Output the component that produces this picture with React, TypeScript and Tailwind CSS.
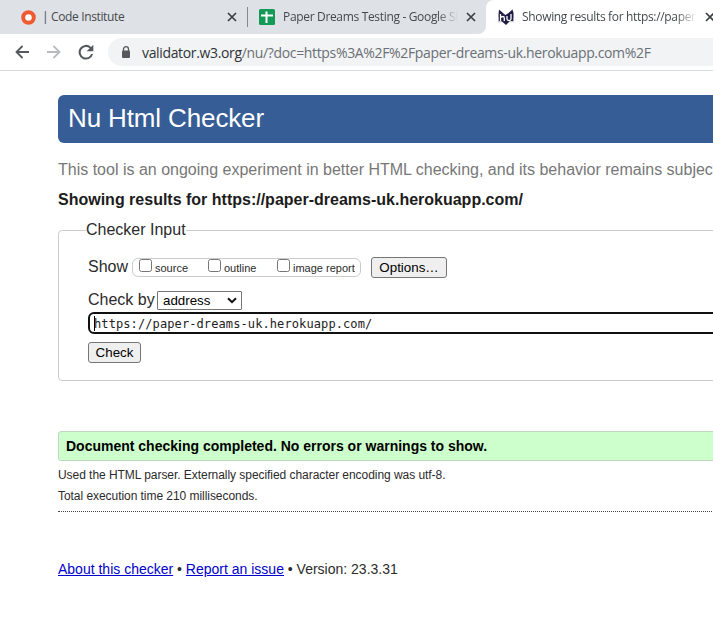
import type { ReactNode } from "react";

function CloseIcon() {
  return (
    <svg width="10" height="10" viewBox="0 0 10 10" className="shrink-0" stroke="#3c4043" strokeWidth="1.7">
      <path d="M1 1 9 9M9 1 1 9" />
    </svg>
  );
}

function SheetsIcon() {
  return (
    <svg width="16" height="16" viewBox="0 0 16 16" className="shrink-0">
      <rect width="16" height="16" rx="1.5" fill="#159957" />
      <path d="M7.5 2.5V14M2 6.5H14" stroke="#fff" strokeWidth="2" />
    </svg>
  );
}

function CheckerIcon() {
  return (
    <svg width="16" height="16" viewBox="0 0 16 16" className="shrink-0">
      <path d="M1 0.5 5.5 4.5 7.5 6 10.5 4 14.5 0.5 15.5 4V12H12L8 16 4 12.5 0.5 12V6Z" fill="#211c44" />
      <path d="M2.5 5V12M2.5 9C3.5 7 6.3 7 6.3 9V12M9 7V10C9 12 13 12 13 10V5" fill="none" stroke="#fff" strokeWidth="1.3" />
      <path d="M0 8V13H3.5M12.5 12.7H16V9" fill="none" stroke="#c9c8d2" strokeWidth="1" />
    </svg>
  );
}

function TabStrip() {
  return (
    <div className="flex h-[34px] bg-white font-['Open_Sans','Noto_Sans',sans-serif] text-[12px] text-[#45494d]">
      <div className="flex w-[247px] items-center bg-[#dee1e6] pl-[21px]">
        <svg width="15" height="15" viewBox="0 0 15 15" className="shrink-0">
          <circle cx="7.5" cy="7.5" r="5.3" fill="#fff" stroke="#f05a30" strokeWidth="4" />
        </svg>
        <span className="ml-[6px] w-[185px] whitespace-nowrap tracking-[-0.36px]">| Code Institute</span>
        <CloseIcon />
      </div>
      <div className="flex w-[239px] items-center rounded-br-[8px] bg-[#dee1e6]">
        <div className="mr-[11px] h-[20px] w-px bg-[#85898e]" />
        <SheetsIcon />
        <span className="ml-[8px] w-[175px] overflow-hidden whitespace-nowrap tracking-[-0.33px] [mask-image:linear-gradient(90deg,#000_88%,transparent)]">
          Paper Dreams Testing - Google Sheets
        </span>
        <span className="ml-[8px]"><CloseIcon /></span>
      </div>
      <div className="flex w-[227px] bg-[linear-gradient(#dee1e6_50%,#fff_50%)]">
        <div className="flex w-full items-center overflow-hidden rounded-tl-[8px] bg-white pl-[12px]">
          <CheckerIcon />
          <span className="ml-[8px] w-[175px] shrink-0 overflow-hidden whitespace-nowrap tracking-[-0.33px] [mask-image:linear-gradient(90deg,#000_88%,transparent)]">
            Showing results for https://paper-dreams
          </span>
          <span className="ml-[8px]"><CloseIcon /></span>
        </div>
      </div>
    </div>
  );
}

function AddressBar() {
  return (
    <div className="flex h-[37px] items-center border-b border-[#d9dcdf] bg-white pl-[15px]">
      <svg width="14" height="14" viewBox="0 0 14 14" className="shrink-0" fill="none" stroke="#55595e" strokeWidth="1.8">
        <path d="M14 7H1.5M7.5 1 1.5 7 7.5 13" />
      </svg>
      <svg width="14" height="14" viewBox="0 0 14 14" className="ml-[18px] shrink-0" fill="none" stroke="#b9bbbe" strokeWidth="1.8">
        <path d="M0 7H12.5M6.5 1 12.5 7 6.5 13" />
      </svg>
      <svg width="16" height="16" viewBox="0 0 24 24" className="ml-[17px] shrink-0" fill="#55595e">
        <path d="M19.6 4.4A11 11 0 1 0 22.6 15H19.6A8 8 0 1 1 17.5 6.5L13 11H23V1Z" />
      </svg>
      <div className="ml-[14px] flex h-[28px] flex-1 items-center rounded-l-full bg-[#f1f3f4] pl-[13px]">
        <svg width="10" height="13" viewBox="0 0 10 13" className="shrink-0">
          <path d="M2.5 5V3.2a2.5 2.5 0 0 1 5 0V5" fill="none" stroke="#55595e" strokeWidth="1.3" />
          <rect x="1" y="4.5" width="8" height="7.5" rx="1" fill="#55595e" />
        </svg>
        <span className="ml-[11px] whitespace-nowrap font-['Open_Sans','Noto_Sans',sans-serif] text-[14px] tracking-[-0.345px] text-[#6b7075]">
          <span className="text-[#303337]">validator.w3.org</span>/nu/?doc=https%3A%2F%2Fpaper-dreams-uk.herokuapp.com%2F
        </span>
      </div>
    </div>
  );
}

function ShowOption({ label, className }: { label: string; className: string }) {
  return (
    <label className={`flex ${className}`}>
      <span className="h-[13px] w-[13px] rounded-[2.5px] border border-[#767676] bg-white" />
      <span className="ml-[3px] mt-[2px] whitespace-nowrap text-[11px] leading-[14px]">{label}</span>
    </label>
  );
}

function PushButton({ children, className }: { children: ReactNode; className: string }) {
  return (
    <button className={`flex h-[21px] items-center justify-center rounded-[3px] border border-[#767676] bg-[#efefef] text-[13.333px] leading-[15px] text-black ${className}`}>
      {children}
    </button>
  );
}

function CheckerForm() {
  return (
    <fieldset className="mt-[11px] h-[160px] w-[800px] rounded-[4px] border border-[#ccc] pl-[29px]">
      <legend className="ml-[-2px] h-[18px] whitespace-nowrap text-[16px] leading-[18px]">Checker Input</legend>
      <div className="mt-[18px] flex h-[21px]">
        <span className="w-[44px] text-[16px] leading-[20px]">Show</span>
        <div className="mt-px flex h-[19px] w-[229px] rounded-[6px] border border-[#ccc] pl-[6px]">
          <ShowOption label="source" className="w-[69px]" />
          <ShowOption label="outline" className="w-[69px]" />
          <ShowOption label="image report" className="w-[80px]" />
        </div>
        <PushButton className="ml-[10px] w-[76px]">Options…</PushButton>
      </div>
      <div className="mt-[13px] flex h-[19px]">
        <span className="w-[69px] whitespace-nowrap text-[16px] leading-[18px]">Check by</span>
        <div className="flex h-[19px] w-[85px] items-center justify-between rounded-[1px] border border-[#767676] bg-white pl-[5px] pr-[4px] text-[13.333px] leading-[15px] text-black">
          <span>address</span>
          <svg width="10" height="7" viewBox="0 0 10 7" fill="none" stroke="#111" strokeWidth="2">
            <path d="M1 1.2 5 5.2 9 1.2" />
          </svg>
        </div>
      </div>
      <div className="mt-[2px] flex h-[22px] w-[740px] items-center rounded-[6px] border-2 border-[#101010] bg-white pl-[4px]">
        <span className="h-[15px] w-px bg-black" />
        <span className="ml-[-1px] mt-[2px] whitespace-nowrap font-['DejaVu_Sans_Mono',monospace] text-[12px] leading-[15px] tracking-[0.1px] text-[#222]">
          https://paper-dreams-uk.herokuapp.com/
        </span>
      </div>
      <PushButton className="mt-[8px] w-[53px]">Check</PushButton>
    </fieldset>
  );
}

export default function App() {
  return (
    <div className="h-[617px] w-[713px] overflow-hidden bg-white font-['Liberation_Sans',Arial,sans-serif] text-[#2b2b2b]">
      <TabStrip />
      <AddressBar />
      <main className="ml-[58px] mt-[24px] w-[800px]">
        <h1 className="h-[48px] rounded-[6px] bg-[#365d95] pl-[10px] text-[26px] leading-[46px] tracking-[-0.13px] text-white">Nu Html Checker</h1>
        <p className="mt-[17px] whitespace-nowrap text-[16px] leading-[20px] text-[#777]">
          This tool is an ongoing experiment in better HTML checking, and its behavior remains subject to change
        </p>
        <h2 className="mt-[10px] whitespace-nowrap text-[16px] font-bold leading-[20px] text-[#1c1c1c]">
          Showing results for https://paper-dreams-uk.herokuapp.com/
        </h2>
        <CheckerForm />
        <p className="mt-[50px] h-[30px] rounded-[3px] border border-[#bfd6bf] bg-[#ccffcc] pl-[7px] text-[14px] font-bold leading-[28px] text-black">
          Document checking completed. No errors or warnings to show.
        </p>
        <p className="mt-[4px] text-[12px] leading-[20px] tracking-[-0.05px]">Used the HTML parser. Externally specified character encoding was utf-8.</p>
        <p className="mt-px h-[26px] border-b border-dotted border-[#444] text-[12px] leading-[20px] tracking-[-0.05px]">Total execution time 210 milliseconds.</p>
        <p className="mt-[47px] whitespace-nowrap text-[14px] leading-[20px]">
          <a className="text-[#0000cc] underline">About this checker</a> • <a className="text-[#0000cc] underline">Report an issue</a> • Version: 23.3.31
        </p>
      </main>
    </div>
  );
}
